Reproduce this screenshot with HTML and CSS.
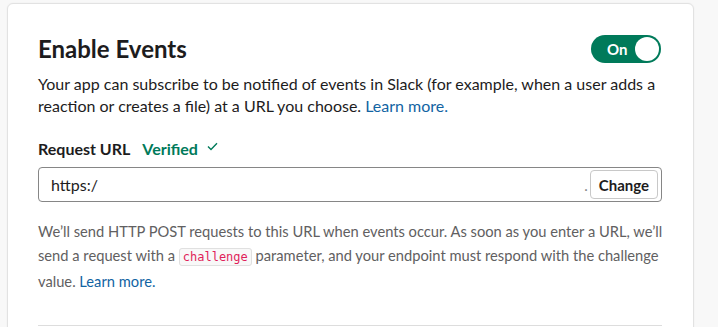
FILE: index.html
```html
<!DOCTYPE html>
<html lang="en">
<head>
    <meta charset="UTF-8">
    <meta name="viewport" content="width=device-width, initial-scale=1.0">
    <title>Event Subscriptions</title>
    <link rel="stylesheet" href="styles.css">
</head>
<body>
    <div class="card">
        <!-- header with toggle -->
        <div class="card-header">
            <h1>Enable Events</h1>
            <div class="toggle">
                <span class="toggle-label">On</span>
                <span class="toggle-knob"></span>
            </div>
        </div>
        <p class="desc">Your app can subscribe to be notified of events in Slack (for example, when a user adds a reaction or creates a file) at a URL you choose. <a href="#">Learn more.</a></p>

        <!-- request url -->
        <div class="field-label">
            Request URL
            <span class="verified">Verified</span>
            <svg class="check" width="11" height="9" viewBox="0 0 11 9"><path d="M1 4.6l3 3 6-6.3" fill="none" stroke="#007a5a" stroke-width="1.4"/></svg>
        </div>
        <div class="url-input">
            <span class="url-text">https:/</span>
            <span class="url-tail">.</span>
            <button class="change-btn">Change</button>
        </div>
        <p class="help">We’ll send HTTP POST requests to this URL when events occur. As soon as you enter a URL, we’ll send a request with a <code>challenge</code> parameter, and your endpoint must respond with the challenge value. <a href="#">Learn more.</a></p>

        <hr class="divider">
    </div>
</body>
</html>
```

FILE: styles.css
```css
body {
    margin: 0;
    background-color: #f8f8f8;
    font-family: Lato, "Liberation Sans", sans-serif;
    color: #1d1c1d;
    overflow: hidden;
}
.card {
    margin: 3px 0 0 7px;
    width: 624px;
    padding: 31px 31px 20px 30px;
    background-color: #fff;
    border: 1px solid #e2e2e2;
    border-radius: 6px;
    box-shadow: 0 0 2px rgba(0,0,0,0.05);
}
.card-header {
    display: flex;
    justify-content: space-between;
    align-items: center;
}
.card-header h1 {
    margin: 0;
    font-size: 24px;
    font-weight: 700;
    line-height: 28px;
}
.toggle {
    display: flex;
    align-items: center;
    width: 70px;
    height: 28px;
    box-sizing: border-box;
    padding: 0 2px 0 16px;
    border-radius: 14px;
    background-color: #007a5a;
    margin-right: 1px;
}
.toggle-label {
    color: #fff;
    font-weight: 700;
    font-size: 15px;
    flex: 1;
}
.toggle-knob {
    width: 24px;
    height: 24px;
    border-radius: 50%;
    background-color: #fff;
}
.desc {
    margin: 10px 0 0;
    font-size: 16px;
    line-height: 22px;
}
a {
    color: #1264a3;
    text-decoration: none;
}
.field-label {
    margin-top: 21px;
    font-size: 16px;
    font-weight: 700;
    line-height: 22px;
    display: flex;
    align-items: center;
}
.verified {
    color: #007a5a;
    margin-left: 12px;
}
.check {
    margin-left: 9px;
    margin-top: -6px;
}
.url-input {
    margin-top: 7px;
    height: 35px;
    box-sizing: border-box;
    border: 1px solid #868686;
    border-radius: 4px;
    display: flex;
    align-items: center;
    padding: 0 3px 0 12px;
}
.url-text {
    font-size: 16px;
    flex: 1;
}
.url-tail {
    font-size: 15px;
    color: #888;
    margin-right: 2px;
}
.change-btn {
    height: 29px;
    padding: 0 8px;
    background-color: #fff;
    border: 1px solid #c8c8c8;
    border-radius: 4px;
    font-family: Lato, "Liberation Sans", sans-serif;
    font-size: 15px;
    font-weight: 700;
    color: #1d1c1d;
}
.help {
    margin: 17px -20px 0 0;
    font-size: 14.7px;
    line-height: 24px;
    color: #616061;
}
.help code {
    font-family: "DejaVu Sans Mono", monospace;
    font-size: 12px;
    color: #e01e5a;
    background-color: #f8f8f8;
    border: 1px solid #e0e0e0;
    border-radius: 3px;
    padding: 1px 3px;
}
.divider {
    margin: 32px 0 0;
    border: none;
    border-top: 1px solid #ddd;
}
```
